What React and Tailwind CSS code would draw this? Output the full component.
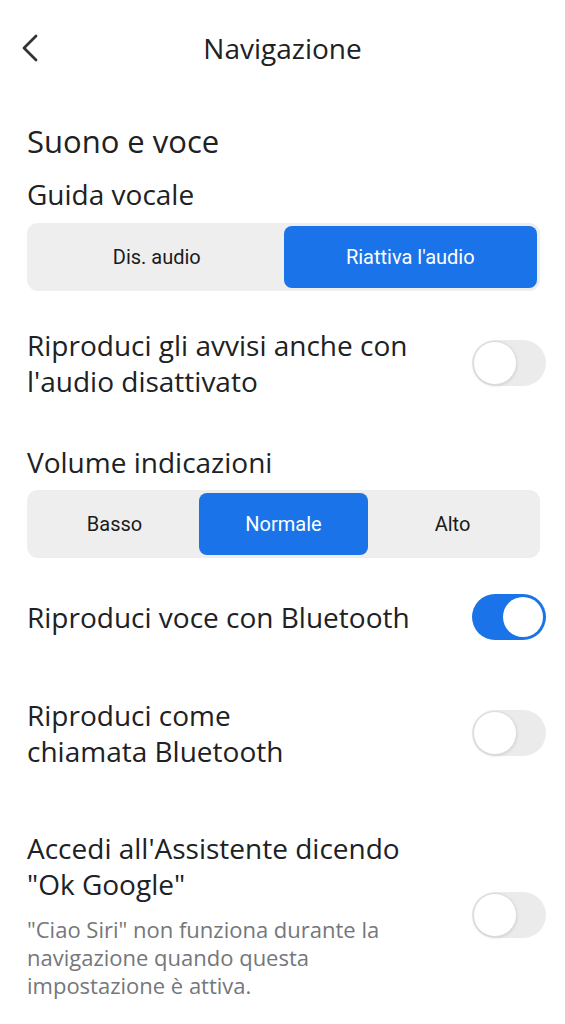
const Toggle = ({ on }) => {
  return (
    <div
      className={
        on
          ? "w-[74px] h-[46px] rounded-full bg-[#1a73e8] flex items-center justify-end p-[3px] shrink-0"
          : "w-[74px] h-[46px] rounded-full bg-[#ebebec] flex items-center justify-start p-[1px] shrink-0"
      }
    >
      <div
        className={
          on
            ? "w-[40px] h-[40px] rounded-full bg-white"
            : "w-[44px] h-[44px] rounded-full bg-white border border-[#dcdcdc] shadow-[0_1px_3px_rgba(0,0,0,0.12)]"
        }
      />
    </div>
  );
};

const Segmented = ({ options, active }) => {
  return (
    <div className="flex h-[68px] rounded-[11px] bg-[#eeeeee] p-[3px] font-['Roboto',sans-serif]">
      {options.map((opt, i) => (
        <div
          key={opt}
          className={
            i === active
              ? "flex-1 flex items-center justify-center rounded-[8px] bg-[#1a73e8] text-white text-[20px]"
              : "flex-1 flex items-center justify-center text-[#1b1b1b] text-[20px]"
          }
        >
          {opt}
        </div>
      ))}
    </div>
  );
};

const Row = ({ children, on, className }) => {
  return (
    <div className={"flex items-center justify-between gap-4 " + className}>
      <div className="flex-1">{children}</div>
      <Toggle on={on} />
    </div>
  );
};

export default function App() {
  return (
    <div className="min-h-screen bg-white text-[#202124] font-['Open_Sans',sans-serif]">
      <div className="grid grid-cols-[64px_1fr_64px] h-[96px] items-center">
        <div className="pl-[21px] flex items-center">
          <svg width="18" height="28" viewBox="0 0 18 28" fill="none">
            <path d="M15 2 L3 14 L15 26" stroke="#333333" strokeWidth="2.8" strokeLinecap="round" strokeLinejoin="round" />
          </svg>
        </div>
        <h1 className="text-center text-[28px] leading-[36px]">Navigazione</h1>
        <div />
      </div>

      <div className="pl-[27px] pr-[19px]">
        <h2 className="text-[31px] leading-[36px] mt-[27px]">Suono e voce</h2>
        <h3 className="text-[28px] leading-[36px] mt-[17px]">Guida vocale</h3>
        <div className="mt-[11px] pr-[6px]">
          <Segmented options={["Dis. audio", "Riattiva l'audio"]} active={1} />
        </div>

        <Row on={false} className="mt-[36px]">
          <p className="text-[28px] leading-[36px]">
            Riproduci gli avvisi anche con
            <br />
            l'audio disattivato
          </p>
        </Row>

        <h3 className="text-[28px] leading-[36px] mt-[45px]">Volume indicazioni</h3>
        <div className="mt-[10px] pr-[6px]">
          <Segmented options={["Basso", "Normale", "Alto"]} active={1} />
        </div>

        <Row on={true} className="mt-[36px]">
          <p className="text-[28px] leading-[36px]">Riproduci voce con Bluetooth</p>
        </Row>

        <Row on={false} className="mt-[57px]">
          <p className="text-[28px] leading-[36px]">
            Riproduci come
            <br />
            chiamata Bluetooth
          </p>
        </Row>

        <Row on={false} className="mt-[61px]">
          <p className="text-[28px] leading-[36px]">
            Accedi all'Assistente dicendo
            <br />
            "Ok Google"
          </p>
          <p className="text-[22px] leading-[28px] mt-[13px] text-[#74777b]">
            "Ciao Siri" non funziona durante la
            <br />
            navigazione quando questa
            <br />
            impostazione è attiva.
          </p>
        </Row>
      </div>
    </div>
  );
}
